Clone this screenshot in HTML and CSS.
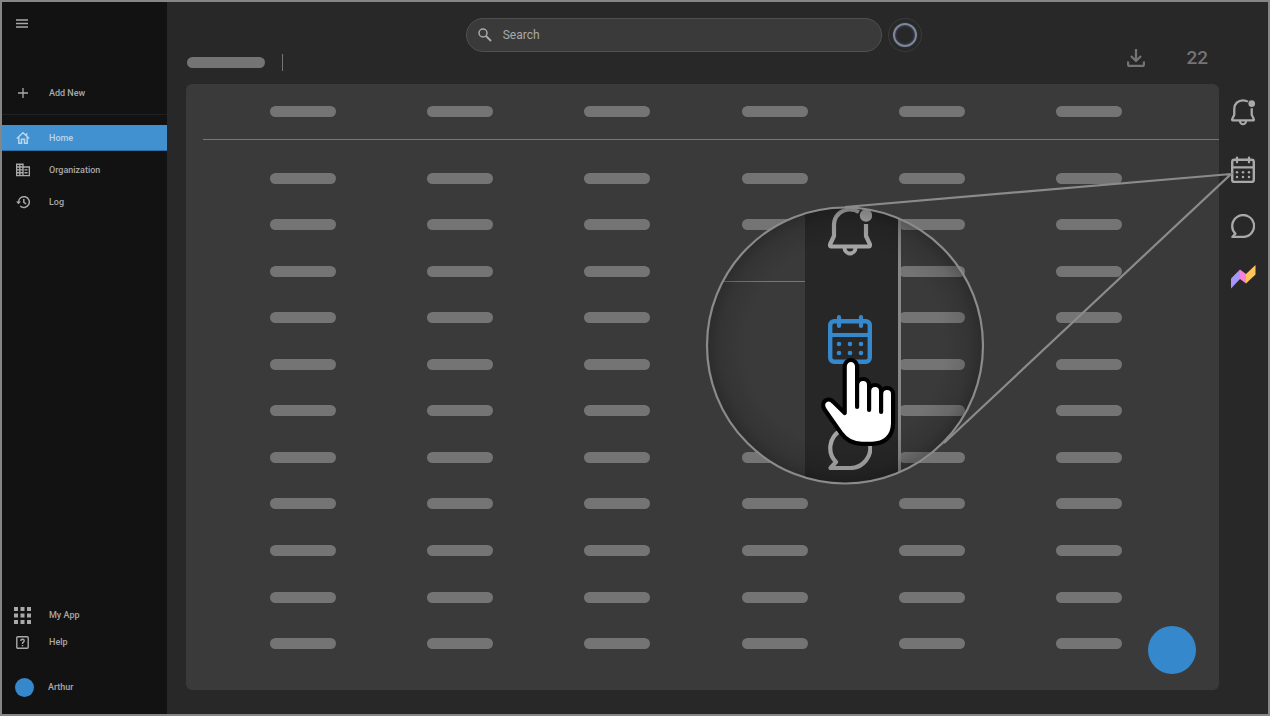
FILE: index.html
```html
<!DOCTYPE html>
<html lang="en">
<head>
<meta charset="utf-8">
<title>Home</title>
<link rel="stylesheet" href="styles.css">
</head>
<body>
<svg class="defs" aria-hidden="true">
  <symbol id="bell" viewBox="0 0 44 50">
    <path d="M31 6C28 4.200 25 3.500 22 3.500C13 3.500 6 10 6 19V30L2 38.500Q2 40.500 3 40.500H41Q42 40.500 42 38.500L38 30V18" fill="none" stroke="currentColor" stroke-width="4.200" stroke-linejoin="round"/>
    <path d="M16.500 41.500a5.500 6 0 0 0 11 0" fill="none" stroke="currentColor" stroke-width="4"/>
    <circle cx="38" cy="9.500" r="6.200" fill="currentColor"/>
  </symbol>
  <symbol id="calendar" viewBox="0 0 44 50">
    <rect x="2.200" y="6.200" width="39.600" height="40.600" rx="4" fill="none" stroke="currentColor" stroke-width="4.400"/>
    <path d="M2 20H42M11 2.200V11M33 2.200V11" fill="none" stroke="currentColor" stroke-width="4.200" stroke-linecap="round"/>
    <g fill="currentColor"><circle cx="11" cy="29" r="2.300"/><circle cx="22" cy="29" r="2.300"/><circle cx="33" cy="29" r="2.300"/><circle cx="11" cy="38" r="2.300"/><circle cx="22" cy="38" r="2.300"/><circle cx="33" cy="38" r="2.300"/></g>
  </symbol>
  <symbol id="chat" viewBox="0 0 44 44">
    <path d="M22 42H2.500L8 36A20 20 0 1 1 22 42Z" fill="none" stroke="currentColor" stroke-width="4.200" stroke-linejoin="round"/>
  </symbol>
</svg>
<div class="app">
  <aside class="sidebar">
    <button class="menu" aria-label="Menu"><svg width="12" height="9" viewBox="0 0 12 9"><path d="M0 1H12M0 4.500H12M0 8H12" stroke="currentColor" stroke-width="1.500"/></svg></button>
    <button class="item add"><span class="icon"><svg width="10" height="10" viewBox="0 0 10 10"><path d="M5 0V10M0 5H10" stroke="currentColor" stroke-width="1.300"/></svg></span>Add New</button>
    <nav class="nav">
      <a class="item active" href="#"><span class="icon"><svg width="14" height="14" viewBox="0 0 14 14" fill="none" stroke="currentColor" stroke-width="1.500"><path d="M.8 7.500L7 1.800L13.200 7.500M2.800 6V12.300H5.500V8.200H8.500V12.300H11.200V6M10.600 5V2.200"/></svg></span>Home</a>
      <a class="item" href="#"><span class="icon"><svg width="14" height="14" viewBox="0 0 14 14" fill="none" stroke="currentColor" stroke-width="1.400"><path d="M.6 1.200H7V12.600H.6ZM.6 4H7M.6 6.900H7M.6 9.700H7M3.800 1.200V12.600M7 4H13.400V12.600H7M8.500 6.900H11.500M8.500 9.700H11.500"/></svg></span>Organization</a>
      <a class="item" href="#"><span class="icon"><svg width="14" height="14" viewBox="0 0 14 14" fill="none" stroke="currentColor" stroke-width="1.500"><path d="M2.500 7A5.400 5.400 0 1 1 4.200 11M7.800 4V7.400L10.200 9"/><path d="M0 6.500H5L2.500 9.200Z" fill="currentColor" stroke="none"/></svg></span>Log</a>
    </nav>
    <nav class="nav lower">
      <a class="item" href="#"><span class="icon"><svg width="17" height="17" viewBox="0 0 17 17"><path d="M0 2H17M0 8.500H17M0 15H17" stroke="currentColor" stroke-width="4" stroke-dasharray="4 2.500"/></svg></span>My App</a>
      <a class="item" href="#"><span class="icon"><svg width="13" height="13" viewBox="0 0 13 13" fill="none" stroke="currentColor" stroke-width="1.400"><rect x=".8" y=".8" width="11.400" height="11.400" rx="1"/><path d="M4.800 4.900Q4.800 3.300 6.500 3.300T8.200 4.800Q8.200 5.600 7.300 6.200T6.500 8M6.500 9V10.200"/></svg></span>Help</a>
      <a class="item user" href="#"><span class="avatar"></span>Arthur</a>
    </nav>
  </aside>
  <main class="main">
    <header class="top">
      <div class="crumb"><span class="pill wide"></span><span class="divider"></span></div>
      <div class="center">
        <label class="search"><svg width="14" height="14" viewBox="0 0 14 14" fill="none" stroke="currentColor"><circle cx="5" cy="5" r="4" stroke-width="1.500"/><path d="M8 8L13 13" stroke-width="1.900"/></svg><input type="text" placeholder="Search" aria-label="Search"></label>
        <button class="assistant" aria-label="Assistant"><span class="ring"></span></button>
      </div>
      <div class="tools">
        <button class="plain" aria-label="Download"><svg width="18" height="18" viewBox="0 0 18 18" fill="none" stroke="currentColor" stroke-width="2.200"><path d="M9 0V12M4 7L9 12L14 7M1.100 12.500V15.400Q1.100 16.900 2.600 16.900H15.400Q16.900 16.900 16.900 15.400V12.500"/></svg></button>
        <span class="count">22</span>
      </div>
    </header>
    <section class="panel">
      <table class="table">
        <colgroup><col class="gutter"><col><col><col><col><col><col><col class="tail"></colgroup>
        <thead><tr><th></th><th><i class="pill"></i></th><th><i class="pill"></i></th><th><i class="pill"></i></th><th><i class="pill"></i></th><th><i class="pill"></i></th><th><i class="pill"></i></th><th></th></tr></thead>
        <tbody id="rows"></tbody>
      </table>
      <button class="fab" aria-label="New"></button>
    </section>
  </main>
  <aside class="rail">
    <button class="plain" aria-label="Notifications"><svg width="24" height="28"><use href="#bell"/></svg></button>
    <button class="plain" aria-label="Calendar"><svg width="24" height="28"><use href="#calendar"/></svg></button>
    <button class="plain" aria-label="Chat"><svg width="24" height="24"><use href="#chat"/></svg></button>
    <button class="plain" aria-label="Workspace"><svg width="25" height="24" viewBox="0 0 25 24"><path d="M0 13.500L9 4.500V14L0 23.500Z" fill="#a797fb"/><path d="M9 4.500L15 9V18.500L9 14Z" fill="#f683d7"/><path d="M15 9L24.500 0V9.500L15 18.500Z" fill="#ffc45c"/></svg></button>
  </aside>
  <svg class="callout" width="1270" height="716" viewBox="0 0 1270 716" aria-hidden="true">
    <defs>
      <clipPath id="lens"><circle cx="845" cy="345.500" r="138"/></clipPath>
      <radialGradient id="shade"><stop offset=".72" stop-color="#000" stop-opacity="0"/><stop offset=".9" stop-color="#000" stop-opacity=".1"/><stop offset="1" stop-color="#000" stop-opacity=".25"/></radialGradient>
    </defs>
    <g clip-path="url(#lens)">
      <path d="M700 200H805V490H700Z" fill="#3a3a3a"/>
      <path d="M700 281.500H805" stroke="#777"/>
      <path d="M805 200H898V490H805Z" fill="#272727"/>
      <path d="M899.500 200V490" stroke="#888" stroke-width="3"/>
      <use href="#bell" class="muted" x="828" y="206" width="44" height="50"/>
      <use href="#calendar" class="accent" x="828" y="315" width="44" height="50"/>
      <use href="#chat" class="muted" x="828" y="426" width="44" height="44"/>
      <circle cx="845" cy="345.500" r="138" fill="url(#shade)"/>
    </g>
    <g fill="none" stroke="#8b8b8b" stroke-width="2.200">
      <circle cx="845" cy="345.500" r="138"/>
      <path d="M845 207L1231 174L944 443"/>
    </g>
    <path d="M844.700 413V366.500a6.200 6.500 0 0 1 12.400 0V407V385a6 6 0 0 1 12 0V410V391a6 6 0 0 1 12 0V412V394a6 6 0 0 1 12 0V423C893 437 884 443.800 872 443.800H862C852 443.800 846 440 841 433L824.500 409.500C820 402 828 396 833.500 402Z" fill="#fff" stroke="#000" stroke-width="4.200" stroke-linejoin="round"/>
  </svg>
</div>
<script src="rows.js"></script>
</body>
</html>
```

FILE: styles.css
```css
* { box-sizing: border-box; }
body { margin: 0; background: #282828; color: #a9a9a9; font: 500 9px/12px Roboto, "Liberation Sans", sans-serif; }
button { padding: 0; border: 0; background: none; color: inherit; font: inherit; cursor: pointer; }
a { color: inherit; text-decoration: none; }
svg { display: block; }
.defs { position: absolute; width: 0; height: 0; }
.app { position: relative; display: flex; min-height: 100vh; border: 2px solid #868686; overflow: hidden; }

.sidebar { display: flex; flex-direction: column; flex: none; width: 165px; background: #121212; }
.menu { align-self: flex-start; margin: 17px 14px 0; }
.item { display: flex; align-items: center; width: 100%; height: 26px; padding-left: 12px; text-align: left; }
.icon { display: flex; justify-content: center; width: 17px; margin-right: 18px; }
.add { height: 44px; margin-top: 43px; border-bottom: 1px solid #202020; }
.nav { display: flex; flex-direction: column; gap: 6px; margin-top: 10px; }
.active { background: #4190cf; color: #b9d6ed; border-bottom: 1px solid #2b6da4; }
.lower { gap: 1px; margin-top: auto; padding-bottom: 14px; }
.user { margin-top: 18px; }
.avatar { width: 19px; height: 19px; margin: 0 14px 0 1px; border-radius: 50%; background: #3688cc; }

.main { display: flex; flex: 1; flex-direction: column; min-width: 0; padding: 0 0 24px 19px; }
.top { display: grid; grid-template-columns: 279fr 457fr 286fr; height: 82px; padding: 0 11px 0 1px; }
.pill { display: block; width: 66px; height: 11px; margin: 0 auto; border-radius: 6px; background: #747474; }
.wide { width: 78px; margin: 0; }
.crumb { display: flex; align-items: center; gap: 17px; height: 17px; margin-top: 52px; }
.divider { width: 1px; height: 17px; background: #747474; }
.center { display: flex; gap: 6px; height: 34px; margin-top: 16px; }
.search { display: flex; flex: 1; align-items: center; gap: 11px; min-width: 0; padding: 0 11px; border: 1px solid #505050; border-radius: 17px; background: #3a3a3a; }
.search input { flex: 1; min-width: 0; padding: 0; border: 0; outline: 0; background: none; color: inherit; font: 400 12px/16px Roboto, "Liberation Sans", sans-serif; }
.search input::placeholder { color: #a9a9a9; opacity: 1; }
.assistant { display: flex; align-items: center; justify-content: center; width: 34px; height: 34px; border: 1px solid #3b3b3b; border-radius: 50%; }
.ring { width: 24px; height: 24px; border: 2px solid #7f8798; border-radius: 50%; box-shadow: inset 0 0 3px #41547e, 0 0 2px #35415c; }
.tools { display: flex; align-items: center; justify-content: flex-end; gap: 41px; height: 24px; margin-top: 44px; color: #747474; }
.plain { display: block; }
.count { font-size: 19px; line-height: 24px; }

.panel { position: relative; display: grid; flex: 1; padding: 0 0 23px 17px; border-radius: 6px; background: #3a3a3a; }
.table { width: 100%; height: 100%; border-collapse: collapse; table-layout: fixed; }
.table th, .table td { padding: 0; }
.table thead tr { height: 55px; border-bottom: 1px solid #777; }
.table .space { height: 16px; }
.gutter { width: 21px; }
.tail { width: 51px; }
.fab { position: absolute; right: 23px; bottom: 16px; width: 48px; height: 48px; border-radius: 50%; background: #3688cc; }

.rail { display: flex; flex: none; flex-direction: column; align-items: flex-start; gap: 30px; width: 49px; padding: 96px 0 0 12px; }
.rail .plain:last-child { margin-top: -3px; }
.callout { position: absolute; top: -2px; left: -2px; pointer-events: none; }
.muted { color: #a5a5a5; }
.accent { color: #3688cc; }
```

FILE: rows.js
```js
const body = document.getElementById('rows');
const space = body.insertRow();
space.className = 'space';
space.insertCell().colSpan = 8;
for (let r = 0; r < 11; r++) {
  const row = body.insertRow();
  for (let c = 0; c < 8; c++) {
    const cell = row.insertCell();
    if (c > 0 && c < 7) cell.innerHTML = '<i class="pill"></i>';
  }
}
```
